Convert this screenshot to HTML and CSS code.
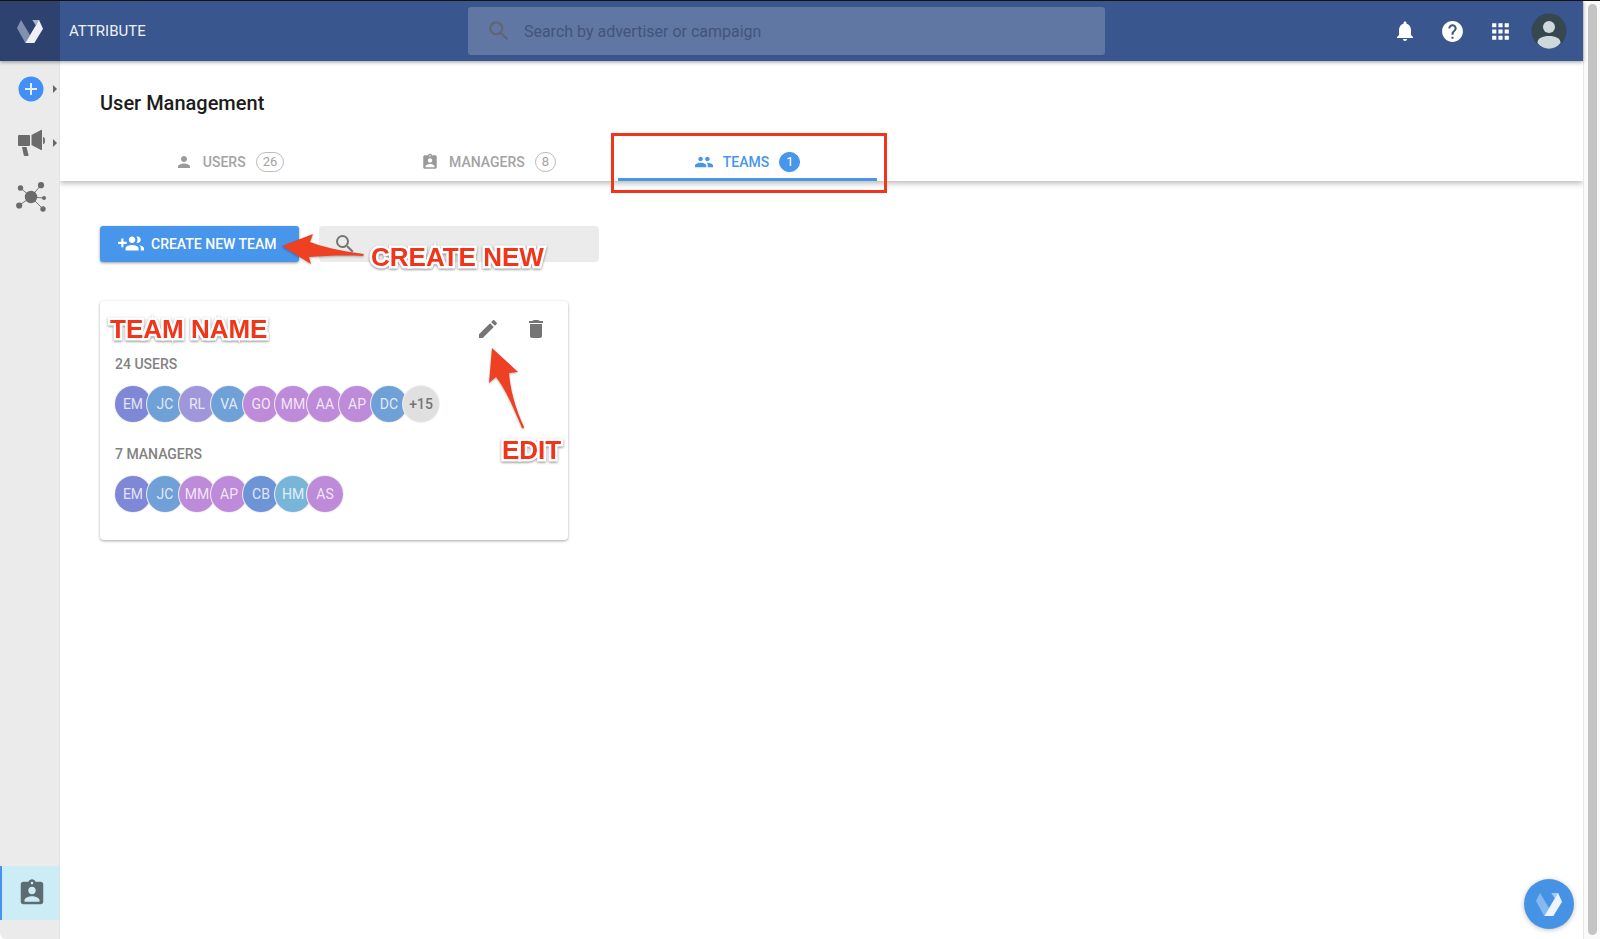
FILE: index.html
```
<!DOCTYPE html>
<html lang="en">
<head>
    <meta charset="UTF-8">
    <meta name="viewport" content="width=device-width, initial-scale=1.0">
    <title>User Management</title>
    <link rel="stylesheet" href="styles.css">
</head>
<body>

<div class="app">
    <header class="topbar">
        <div class="brand">
            <a href="#" class="logo" aria-label="Home">
                <svg width="26" height="23" viewBox="0 0 78 69">
                    <path fill="#8290b0" d="M12 0L0 24l25 45 14-24z"/>
                    <path fill="#a9b3c9" d="M46 0h22L56 16z"/>
                    <path fill="#eef0f5" d="M66 0l12 26-26 43H25z"/>
                </svg>
            </a>
            <span class="brand-name">ATTRIBUTE</span>
        </div>
        <label class="global-search">
            <svg width="26" height="26" viewBox="0 0 24 24"><path d="M15.5 14h-.79l-.28-.27A6.47 6.47 0 0 0 16 9.5 6.5 6.5 0 1 0 9.5 16c1.61 0 3.09-.59 4.23-1.57l.27.28v.79l5 4.99L20.49 19l-4.99-5zm-6 0C7.01 14 5 11.99 5 9.5S7.01 5 9.5 5 14 7.01 14 9.5 11.99 14 9.5 14z"/></svg>
            <input type="text" placeholder="Search by advertiser or campaign" aria-label="Search by advertiser or campaign">
        </label>
        <div class="actions">
            <button aria-label="Notifications">
                <svg width="24" height="24" viewBox="0 0 24 24"><path d="M12 22c1.1 0 2-.9 2-2h-4c0 1.1.89 2 2 2zm6-6v-5c0-3.07-1.64-5.64-4.5-6.32V4c0-.83-.67-1.5-1.5-1.5s-1.5.67-1.5 1.5v.68C7.63 5.36 6 7.92 6 11v5l-2 2v1h16v-1l-2-2z"/></svg>
            </button>
            <button aria-label="Help">
                <svg width="25" height="25" viewBox="0 0 24 24"><path d="M12 2C6.48 2 2 6.48 2 12s4.48 10 10 10 10-4.48 10-10S17.52 2 12 2zm1 17h-2v-2h2v2zm2.07-7.75l-.9.92C13.45 12.9 13 13.5 13 15h-2v-.5c0-1.1.45-2.1 1.17-2.83l1.24-1.26c.37-.36.59-.86.59-1.41 0-1.1-.9-2-2-2s-2 .9-2 2H8c0-2.21 1.79-4 4-4s4 1.79 4 4c0 .88-.36 1.68-.93 2.25z"/></svg>
            </button>
            <button aria-label="Apps">
                <svg width="25" height="25" viewBox="0 0 24 24"><path d="M4 8h4V4H4v4zm6 12h4v-4h-4v4zm-6 0h4v-4H4v4zm0-6h4v-4H4v4zm6 0h4v-4h-4v4zm6-10v4h4V4h-4zm-6 4h4V4h-4v4zm6 6h4v-4h-4v4zm0 6h4v-4h-4v4z"/></svg>
            </button>
            <button aria-label="Account">
                <svg width="36" height="36" viewBox="0 0 36 36">
                    <circle cx="18" cy="18" r="17.5" fill="#37474f"/>
                    <circle cx="18" cy="14" r="6" fill="#cfd8dc"/>
                    <path fill="#cfd8dc" d="M6.5 30c0-5 5-7 11.500-7s11.500 2 11.500 7c-3 3.700-7 5.700-11.500 5.700S9.500 33.700 6.500 30z"/>
                </svg>
            </button>
        </div>
    </header>

    <div class="body">
        <nav class="sidebar">
            <a href="#" class="nav-item has-menu" aria-label="Create">
                <svg width="26" height="26" viewBox="0 0 26 26"><circle cx="13" cy="13" r="12.5" fill="#4290f7"/><path d="M13 7v12M7 13h12" stroke="#ebebeb" stroke-width="2"/></svg>
            </a>
            <a href="#" class="nav-item has-menu" aria-label="Campaigns">
                <svg width="28" height="28" viewBox="0 0 28 28">
                    <rect x="1" y="6" width="12" height="11" rx="1"/>
                    <path d="M14.5 6L24 1q1-.5 1 .5v19q0 1-1 .5l-9.5-5zM26 8q2 0 2 3.500T26 15zM5 18h4.500l2 8q.2 1-1 1H8q-1 0-1.300-1z"/>
                </svg>
            </a>
            <a href="#" class="nav-item" aria-label="Network">
                <svg width="30" height="30" viewBox="0 0 30 30">
                    <path d="M15 15L4.500 6M15 15L25 3M15 15l13 1M15 15L3 23.500M15 15l12 12" stroke="#777" stroke-width="1"/>
                    <circle cx="15" cy="15" r="6.2"/><circle cx="4.5" cy="6" r="2.7"/><circle cx="25" cy="3.2" r="3.1"/><circle cx="28" cy="16" r="2"/><circle cx="3.2" cy="23.5" r="3.1"/><circle cx="27" cy="27" r="2.7"/>
                </svg>
            </a>
            <a href="#" class="nav-item active" aria-label="User management">
                <svg width="30" height="30" viewBox="0 0 24 24"><path d="M19 3h-4.180C14.400 1.840 13.300 1 12 1s-2.400.84-2.820 2H5c-1.100 0-2 .9-2 2v14c0 1.100.9 2 2 2h14c1.100 0 2-.9 2-2V5c0-1.100-.9-2-2-2zm-7 0c.55 0 1 .45 1 1s-.45 1-1 1-1-.45-1-1 .45-1 1-1zm0 4c1.660 0 3 1.340 3 3s-1.340 3-3 3-3-1.340-3-3 1.340-3 3-3zm6 12H6v-1.400c0-2 4-3.100 6-3.100s6 1.100 6 3.100V19z"/></svg>
            </a>
        </nav>

        <main class="content">
            <div class="page-header">
                <h1>User Management</h1>
                <div class="tabs" role="tablist">
                    <button class="tab" role="tab">
                        <svg width="18" height="18" viewBox="0 0 24 24"><path d="M12 12c2.210 0 4-1.790 4-4s-1.790-4-4-4-4 1.790-4 4 1.790 4 4 4zm0 2c-2.670 0-8 1.340-8 4v2h16v-2c0-2.660-5.330-4-8-4z"/></svg>
                        USERS <span class="count">26</span>
                    </button>
                    <button class="tab" role="tab">
                        <svg width="18" height="18" viewBox="0 0 24 24"><path d="M19 3h-4.180C14.400 1.840 13.300 1 12 1s-2.400.84-2.820 2H5c-1.100 0-2 .9-2 2v14c0 1.100.9 2 2 2h14c1.100 0 2-.9 2-2V5c0-1.100-.9-2-2-2zm-7 0c.55 0 1 .45 1 1s-.45 1-1 1-1-.45-1-1 .45-1 1-1zm0 4c1.660 0 3 1.340 3 3s-1.340 3-3 3-3-1.340-3-3 1.340-3 3-3zm6 12H6v-1.400c0-2 4-3.100 6-3.100s6 1.100 6 3.100V19z"/></svg>
                        MANAGERS <span class="count">8</span>
                    </button>
                    <button class="tab active" role="tab" aria-selected="true">
                        <svg width="18" height="18" viewBox="0 0 24 24"><path d="M16.500 11c1.660 0 2.990-1.340 2.990-3s-1.330-3-2.990-3-3 1.340-3 3 1.340 3 3 3zm-9 0c1.660 0 2.990-1.340 2.990-3S9.160 5 7.500 5s-3 1.340-3 3 1.340 3 3 3zm0 2C5.170 13 0 14.170 0 16.500V19h15v-2.500c0-2.330-5.170-3.500-7.500-3.500zm9 0c-.29 0-.62.020-.97.050 1.160.84 1.470 1.970 1.470 3.450V19h7v-2.500c0-2.330-5.170-3.500-7.500-3.500z"/></svg>
                        TEAMS <span class="count">1</span>
                    </button>
                </div>
            </div>

            <div class="toolbar">
                <button class="create">
                    <svg width="26" height="26" viewBox="0 0 24 24"><path d="M8 10H5V7H3v3H0v2h3v3h2v-3h3v-2zm10 1c1.660 0 2.990-1.340 2.990-3S19.660 5 18 5c-.32 0-.63.050-.91.140.57.81.9 1.790.9 2.860s-.34 2.040-.9 2.860c.28.090.59.140.91.140zm-5 0c1.660 0 2.990-1.340 2.990-3S14.660 5 13 5s-3 1.340-3 3 1.340 3 3 3zm6.620 2.160c.83.730 1.380 1.660 1.380 2.840v2h3v-2c0-1.540-2.370-2.490-4.380-2.840zM13 13c-2 0-6 1-6 3v2h12v-2c0-2-4-3-6-3z"/></svg>
                    CREATE NEW TEAM
                </button>
                <label class="team-search">
                    <svg width="24" height="24" viewBox="0 0 24 24"><path d="M15.500 14h-.79l-.28-.27A6.470 6.470 0 0 0 16 9.500 6.500 6.500 0 1 0 9.500 16c1.610 0 3.090-.59 4.230-1.570l.27.28v.79l5 4.990L20.490 19l-4.990-5zm-6 0C7.010 14 5 11.990 5 9.500S7.010 5 9.500 5 14 7.010 14 9.500 11.990 14 9.500 14z"/></svg>
                    <input type="text" aria-label="Search teams">
                </label>
                <svg class="arrow arrow-create" width="84" height="34" viewBox="0 0 84 34"><path d="M1 14L32 2l-3 8c10 4 30 9 54 12l-1 2c-20-1-40 0-54 1l2 7z"/></svg>
                <span class="note note-create">CREATE NEW</span>
            </div>

            <section class="card">
                <div class="card-head">
                    <h2 class="note">TEAM NAME</h2>
                    <button aria-label="Edit team">
                        <svg width="24" height="24" viewBox="0 0 24 24"><path d="M3 17.250V21h3.750L17.810 9.940l-3.750-3.750L3 17.250zM20.710 7.040a1 1 0 0 0 0-1.410l-2.340-2.340a1 1 0 0 0-1.410 0l-1.830 1.830 3.750 3.750 1.830-1.830z"/></svg>
                    </button>
                    <button aria-label="Delete team">
                        <svg width="24" height="24" viewBox="0 0 24 24"><path d="M6 19c0 1.100.9 2 2 2h8c1.100 0 2-.9 2-2V7H6v12zM19 4h-3.500l-1-1h-5l-1 1H5v2h14V4z"/></svg>
                    </button>
                </div>
                <h3>24 USERS</h3>
                <div class="avatars">
                    <span class="avatar indigo">EM</span>
                    <span class="avatar blue">JC</span>
                    <span class="avatar lavender">RL</span>
                    <span class="avatar blue">VA</span>
                    <span class="avatar purple">GO</span>
                    <span class="avatar purple">MM</span>
                    <span class="avatar purple">AA</span>
                    <span class="avatar purple">AP</span>
                    <span class="avatar blue">DC</span>
                    <span class="avatar more">+15</span>
                </div>
                <h3>7 MANAGERS</h3>
                <div class="avatars">
                    <span class="avatar indigo">EM</span>
                    <span class="avatar blue">JC</span>
                    <span class="avatar purple">MM</span>
                    <span class="avatar purple">AP</span>
                    <span class="avatar royal">CB</span>
                    <span class="avatar teal">HM</span>
                    <span class="avatar purple">AS</span>
                </div>
                <svg class="arrow arrow-edit" width="38" height="84" viewBox="0 0 38 84"><path d="M4 1l26 24-9 1c1 15 6 35 15 54q0 2-2 1C27 65 19 44 8 30l-7 6z"/></svg>
                <span class="note note-edit">EDIT</span>
            </section>
        </main>
    </div>

    <button class="fab" aria-label="Open assistant">
        <svg width="26" height="23" viewBox="0 0 78 69">
            <path fill="#86b9ef" d="M12 0L0 24l25 45 14-24z"/>
            <path fill="#a5cbf3" d="M46 0h22L56 16z"/>
            <path fill="#edf4fd" d="M66 0l12 26-26 43H25z"/>
        </svg>
    </button>
</div>
<div class="scrollbar"><div class="thumb"></div></div>

</body>
</html>
```
FILE: styles.css
```
* {
    box-sizing: border-box;
}
body {
    font-family: Roboto, Arial, sans-serif;
    margin: 0;
    height: 100vh;
    display: flex;
    background-color: #fff;
    border-top: 1px solid #15130f;
}
button {
    font-family: inherit;
    background: none;
    border: none;
    padding: 0;
    cursor: pointer;
}
input {
    flex: 1;
    min-width: 0;
    font: inherit;
    background: none;
    border: none;
    outline: none;
}
svg {
    display: block;
    flex: none;
}
.app {
    position: relative;
    flex: 1;
    display: flex;
    flex-direction: column;
}

/* top bar */
.topbar {
    display: grid;
    grid-template-columns: 47fr 64fr 48fr;
    align-items: center;
    height: 60px;
    background-color: #39568e;
    box-shadow: 0 1px 4px rgba(0, 0, 0, 0.4);
    z-index: 2;
}
.brand {
    display: flex;
    align-items: center;
}
.logo {
    display: flex;
    align-items: center;
    justify-content: center;
    width: 60px;
    height: 60px;
    background-color: #2d426f;
}
.brand-name {
    margin-left: 9px;
    color: #eef1f7;
    font-size: 15px;
}
.global-search {
    display: flex;
    align-items: center;
    gap: 10px;
    height: 48px;
    padding: 0 18px;
    border-radius: 3px;
    background-color: #6077a3;
    fill: #5f6672;
    font-size: 16px;
}
.global-search input::placeholder {
    color: #435479;
}
.actions {
    display: flex;
    justify-content: flex-end;
    padding-right: 10px;
    fill: #fff;
}
.actions button {
    display: flex;
    align-items: center;
    justify-content: center;
    width: 48px;
    height: 48px;
}

/* side navigation */
.body {
    flex: 1;
    display: flex;
}
.sidebar {
    display: flex;
    flex-direction: column;
    width: 60px;
    padding: 1px 0 19px;
    background-color: #ebebeb;
    border-right: 1px solid #e2e2e2;
    border-bottom-left-radius: 6px;
    fill: #6b6b6b;
}
.nav-item {
    position: relative;
    display: flex;
    align-items: center;
    justify-content: center;
    height: 54px;
    padding-left: 2px;
}
.nav-item.has-menu::after {
    content: "";
    position: absolute;
    right: 2px;
    top: 23px;
    border: 4px solid transparent;
    border-left-color: #666;
    border-right: none;
}
.nav-item.active {
    margin-top: auto;
    border-left: 2px solid #4a90f5;
    background-color: #ccecf6;
    fill: #5d6c70;
}

/* page header */
.content {
    flex: 1;
    overflow: hidden;
}
.page-header {
    height: 120px;
    display: flex;
    flex-direction: column;
    justify-content: space-between;
    padding: 30px 0 0 40px;
    box-shadow: 0 2px 6px rgba(0, 0, 0, 0.3);
}
h1 {
    margin: 0;
    font-size: 20px;
    line-height: 24px;
    font-weight: 500;
    color: #1c1c1c;
}
.tabs {
    display: flex;
    width: 52.4%;
}
.tab {
    position: relative;
    flex: 1;
    display: flex;
    align-items: center;
    justify-content: center;
    gap: 10px;
    height: 38px;
    color: #a3a3a3;
    fill: #9a9a9a;
    font-size: 14px;
    font-weight: 500;
}
.count {
    min-width: 21px;
    height: 20px;
    padding: 0 6px;
    border: 1px solid #bdbdbd;
    border-radius: 10px;
    font-size: 13px;
    line-height: 18px;
    font-weight: 400;
}
.tab.active {
    color: #4796ec;
    fill: #4796ec;
    box-shadow: inset 0 -3px #4796ec;
}
.tab.active .count {
    border-color: #4796ec;
    background-color: #4796ec;
    color: #fff;
}
.tab.active::after {
    content: "";
    position: absolute;
    inset: -10px -10px -12px -7px;
    border: 3px solid #f0351a;
}

/* toolbar */
.toolbar {
    position: relative;
    display: flex;
    gap: 20px;
    padding: 45px 40px 0;
}
.create {
    display: flex;
    align-items: center;
    gap: 7px;
    height: 36px;
    padding: 0 22px 0 18px;
    border-radius: 3px;
    background-color: #4796ec;
    box-shadow: 0 1px 3px rgba(0, 0, 0, 0.4);
    color: #fff;
    fill: #fff;
    font-size: 14px;
    font-weight: 500;
}
.team-search {
    display: flex;
    align-items: center;
    width: 280px;
    height: 36px;
    padding: 0 14px;
    border-radius: 4px;
    background-color: #ebebeb;
    fill: #757575;
}

/* team card */
.card {
    position: relative;
    width: 468px;
    margin: 39px 0 0 40px;
    padding: 16px 20px 6px 15px;
    border-radius: 4px;
    box-shadow: 0 1px 3px rgba(0, 0, 0, 0.35);
}
.card-head {
    display: flex;
    align-items: center;
    gap: 24px;
    height: 24px;
    fill: #757575;
}
.card-head h2 {
    margin: 0 auto 0 -5px;
}
h3 {
    margin: 13px 0 12px;
    font-size: 14px;
    line-height: 20px;
    font-weight: 500;
    color: #828282;
}
.avatars {
    display: flex;
    margin-bottom: 22px;
}
.avatar {
    width: 36px;
    height: 36px;
    margin-right: -4px;
    border-radius: 50%;
    box-shadow: 0 0 0 1px #f0f0f0;
    color: rgba(255, 255, 255, 0.8);
    font-size: 14px;
    line-height: 36px;
    text-align: center;
}
.indigo { background-color: #7f87d7; }
.blue { background-color: #70a0d8; }
.lavender { background-color: #9f97d9; }
.purple { background-color: #bd8bd9; }
.royal { background-color: #6d94d7; }
.teal { background-color: #78b5d9; }
.more {
    background-color: #e0e0e0;
    color: #757575;
    font-weight: 500;
}

/* callouts */
.note {
    color: #f0351a;
    font-family: "Liberation Sans", Arial, sans-serif;
    font-size: 26px;
    line-height: 30px;
    font-weight: bold;
    white-space: nowrap;
    -webkit-text-stroke: 5px #fff;
    paint-order: stroke fill;
    filter: drop-shadow(0 1px 1px rgba(0, 0, 0, 0.45));
}
.note-create {
    position: absolute;
    left: 311px;
    top: 61px;
}
.note-edit {
    position: absolute;
    left: 402px;
    top: 134px;
}
.arrow {
    position: absolute;
    fill: #ee4023;
    filter: drop-shadow(0 1px 1px rgba(0, 0, 0, 0.3));
}
.arrow-create {
    left: 221px;
    top: 51px;
}
.arrow-edit {
    left: 388px;
    top: 46px;
}

.fab {
    position: absolute;
    right: 9px;
    bottom: 10px;
    display: flex;
    align-items: center;
    justify-content: center;
    width: 50px;
    height: 50px;
    border-radius: 50%;
    background-color: #4693e6;
    box-shadow: 0 1px 5px rgba(0, 0, 0, 0.25);
}
.scrollbar {
    width: 17px;
    padding: 3px 3px 4px 4px;
    border-left: 1px solid #e8e8e8;
    background-color: #fafafa;
}
.thumb {
    height: 100%;
    border-radius: 5px;
    background-color: #c4c4c4;
}
```
